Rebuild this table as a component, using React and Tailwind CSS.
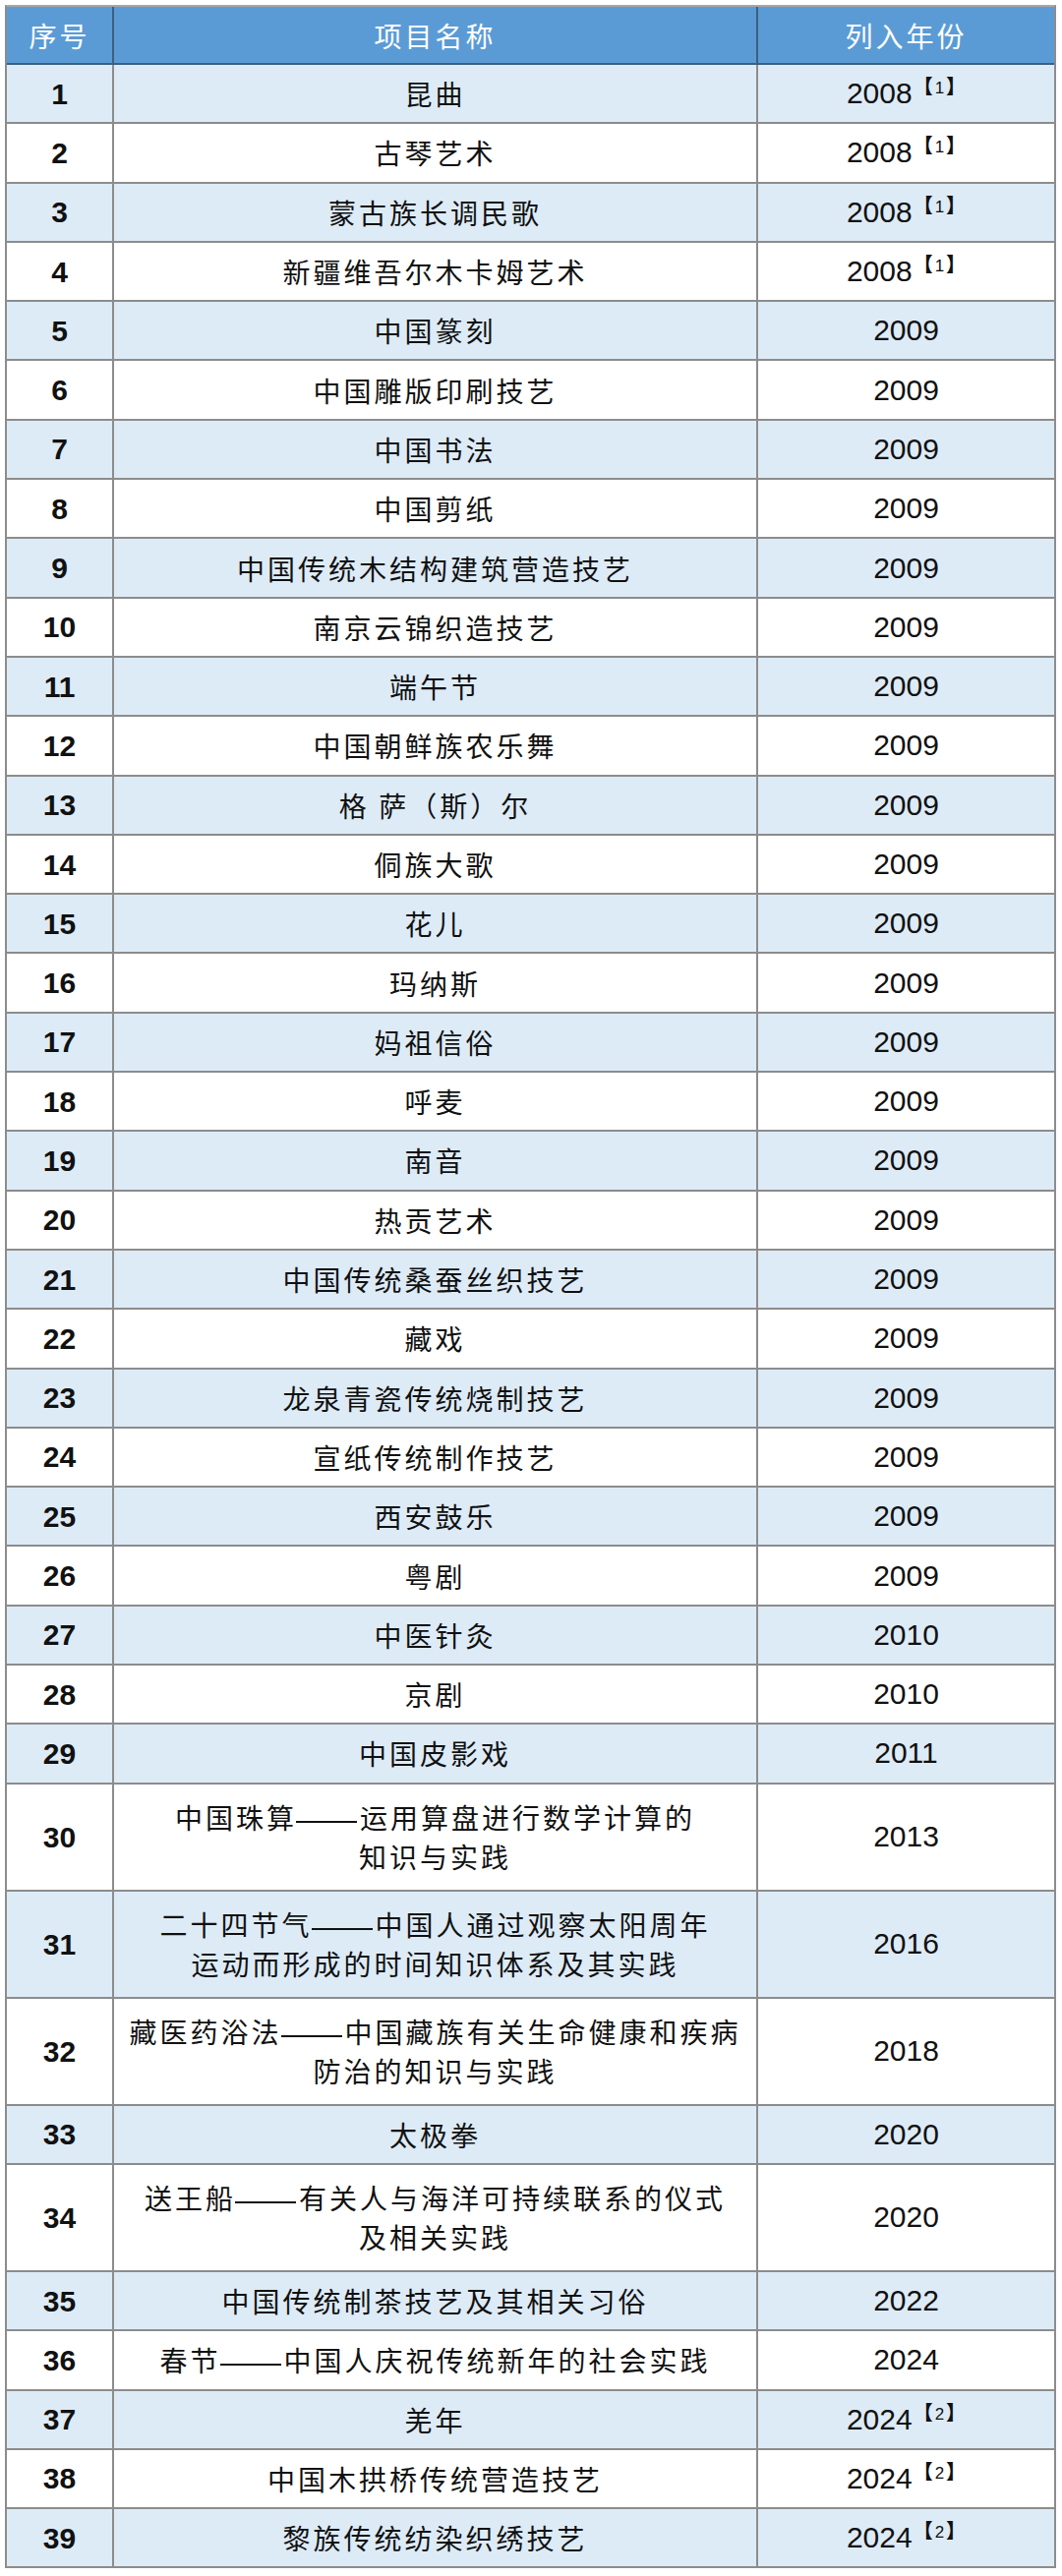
import React from "react";

const rows = [
  ["1", "昆曲", "2008", "1"],
  ["2", "古琴艺术", "2008", "1"],
  ["3", "蒙古族长调民歌", "2008", "1"],
  ["4", "新疆维吾尔木卡姆艺术", "2008", "1"],
  ["5", "中国篆刻", "2009"],
  ["6", "中国雕版印刷技艺", "2009"],
  ["7", "中国书法", "2009"],
  ["8", "中国剪纸", "2009"],
  ["9", "中国传统木结构建筑营造技艺", "2009"],
  ["10", "南京云锦织造技艺", "2009"],
  ["11", "端午节", "2009"],
  ["12", "中国朝鲜族农乐舞", "2009"],
  ["13", "格 萨（斯）尔", "2009"],
  ["14", "侗族大歌", "2009"],
  ["15", "花儿", "2009"],
  ["16", "玛纳斯", "2009"],
  ["17", "妈祖信俗", "2009"],
  ["18", "呼麦", "2009"],
  ["19", "南音", "2009"],
  ["20", "热贡艺术", "2009"],
  ["21", "中国传统桑蚕丝织技艺", "2009"],
  ["22", "藏戏", "2009"],
  ["23", "龙泉青瓷传统烧制技艺", "2009"],
  ["24", "宣纸传统制作技艺", "2009"],
  ["25", "西安鼓乐", "2009"],
  ["26", "粤剧", "2009"],
  ["27", "中医针灸", "2010"],
  ["28", "京剧", "2010"],
  ["29", "中国皮影戏", "2011"],
  ["30", ["中国珠算——运用算盘进行数学计算的", "知识与实践"], "2013"],
  ["31", ["二十四节气——中国人通过观察太阳周年", "运动而形成的时间知识体系及其实践"], "2016"],
  ["32", ["藏医药浴法——中国藏族有关生命健康和疾病", "防治的知识与实践"], "2018"],
  ["33", "太极拳", "2020"],
  ["34", ["送王船——有关人与海洋可持续联系的仪式", "及相关实践"], "2020"],
  ["35", "中国传统制茶技艺及其相关习俗", "2022"],
  ["36", "春节——中国人庆祝传统新年的社会实践", "2024"],
  ["37", "羌年", "2024", "2"],
  ["38", "中国木拱桥传统营造技艺", "2024", "2"],
  ["39", "黎族传统纺染织绣技艺", "2024", "2"],
];

const cjk = "font-['Noto_Sans_CJK_SC',sans-serif]";
const arial = "font-['Liberation_Sans','Noto_Sans_CJK_SC',sans-serif]";

// the long dash is drawn as one unbroken line
function Line({ text }) {
  const parts = text.split("——");
  if (parts.length === 1) return <>{text}</>;
  return (
    <>
      {parts[0]}
      <span className="inline-block w-[62px] h-[2px] bg-[#111] align-middle mr-[3px] -ml-[1px]" />
      {parts[1]}
    </>
  );
}

function Row({ no, name, year, note, index }) {
  const tall = Array.isArray(name);
  const lines = tall ? name : [name];
  const bg = index % 2 === 0 ? "bg-[#ddebf7]" : "bg-white";
  return (
    <div
      className={`grid grid-cols-[109px_655px_1fr] border-b-2 border-[#8c8c8c] ${bg} ${
        tall ? "h-[109px]" : "h-[60.3px]"
      }`}
    >
      <div className={`flex items-center justify-center border-r-2 border-[#8c8c8c] ${arial} font-bold text-[30px] text-[#111]`}>
        {no}
      </div>
      <div className={`flex flex-col items-center justify-center border-r-2 border-[#8c8c8c] ${cjk} text-[28px] tracking-[3px] text-[#111] text-center`}>
        {lines.map((l) => (
          <div key={l} className="leading-[40px] whitespace-nowrap">
            <Line text={l} />
          </div>
        ))}
      </div>
      <div className={`flex items-center justify-center ${arial} text-[30px] text-[#111]`}>
        <span className="leading-none whitespace-nowrap">
          {year}
          {note && (
            <span className={`relative top-[-10px] ml-[1px] text-[20px] leading-none ${cjk} font-black`}>
              【<span className={`${arial} font-normal text-[17px] mx-[2px]`}>{note}</span>】
            </span>
          )}
        </span>
      </div>
    </div>
  );
}

export default function App() {
  return (
    <div className="w-[1080px] h-[2620px] bg-white pt-[5px] pl-[5px]">
      <div className="w-[1069px] border-2 border-t-[#a6a6a6] border-[#8c8c8c] border-b-0">
        <div className={`grid grid-cols-[109px_655px_1fr] h-[59px] bg-[#5b9bd5] border-b-2 border-[#3d5f80] ${cjk} text-[28px] tracking-[3px] text-white`}>
          <div className="flex items-center justify-center border-r-2 border-[#3d5f80]">序号</div>
          <div className="flex items-center justify-center border-r-2 border-[#3d5f80]">项目名称</div>
          <div className="flex items-center justify-center">列入年份</div>
        </div>
        {rows.map((r, i) => (
          <Row key={r[0]} no={r[0]} name={r[1]} year={r[2]} note={r[3]} index={i} />
        ))}
      </div>
    </div>
  );
}
